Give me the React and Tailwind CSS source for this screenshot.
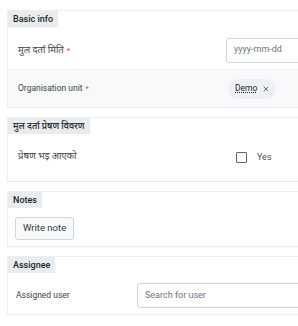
import { X } from 'lucide-react'

const FONT = { fontFamily: 'Roboto, "Noto Sans", "Liberation Sans", sans-serif' }

function Section({ title, children, className = '' }) {
  return (
    <div className={`w-[340px] border border-[#eceef1] bg-white ${className}`}>
      <div className="flex h-[16px] w-fit items-center bg-[#e9ecef] px-[5px] text-[9px] font-medium leading-none text-[#212529]">
        {title}
      </div>
      {children}
    </div>
  )
}

function Req() {
  return <span className="ml-[3px] text-[8px] text-[#e5484d]">*</span>
}

export default function App() {
  return (
    <div className="h-[326px] w-[298px] overflow-hidden bg-white" style={FONT}>
      <div className="pl-[7px] pt-[10px]">
        {/* Basic info */}
        <Section title="Basic info">
          <div className="flex h-[43px] items-center border-b border-[#eceef1] pl-[10px] pt-[4px]">
            <div className="w-[208px] shrink-0 text-[9.5px] leading-none text-[#3d4349]">
              मुल दर्ता मिति<Req />
            </div>
            <div className="flex h-[25px] w-[110px] items-center rounded-[3px] border border-[#ced4da] bg-white pl-[7px] text-[9px] text-[#6c757d]">
              yyyy-mm-dd
            </div>
          </div>
          <div className="flex h-[37px] items-center bg-[#f8f9fa] pl-[10px]">
            <div className="w-[210px] shrink-0 text-[8.5px] leading-none text-[#3d4349]">
              Organisation unit<Req />
            </div>
            <div className="flex h-[20px] items-center gap-[5px] rounded-full bg-[#eef0f3] pl-[7px] pr-[6px] text-[8.5px] text-[#212529]">
              <span className="underline decoration-dotted">Demo</span>
              <X size={8} strokeWidth={2.5} className="text-[#495057]" />
            </div>
          </div>
        </Section>

        {/* Dispatch */}
        <Section title="मुल दर्ता प्रेषण विवरण" className="mt-[9px] border-b-[#e3e7ec]">
          <div className="flex h-[47px] items-center pl-[10px]">
            <div className="w-[218px] shrink-0 pb-[4px] text-[9.5px] leading-none text-[#3d4349]">प्रेषण भइ आएको</div>
            <div className="flex items-center gap-[10px]">
              <span className="h-[11px] w-[11px] rounded-[1px] border-[1.5px] border-[#5c6670] bg-white" />
              <span className="text-[9px] leading-none text-[#495057]">Yes</span>
            </div>
          </div>
        </Section>

        {/* Notes */}
        <Section title="Notes" className="mt-[9px]">
          <div className="pb-[6px] pl-[7px] pt-[9px]">
            <button className="flex h-[23px] items-center rounded-[3px] border border-[#ced4da] bg-[#f8f9fa] px-[7px] text-[9.5px] text-[#343a40]">
              Write note
            </button>
          </div>
        </Section>

        {/* Assignee */}
        <Section title="Assignee" className="mt-[9px]">
          <div className="flex h-[41px] items-center pl-[8px] pt-[4px]">
            <div className="w-[121px] shrink-0 text-[8.5px] leading-none text-[#3d4349]">Assigned user</div>
            <div className="flex h-[25px] w-[200px] items-center rounded-[3px] border border-[#ced4da] bg-white pl-[7px] text-[9px] text-[#6c757d]">
              Search for user
            </div>
          </div>
        </Section>
      </div>
    </div>
  )
}
